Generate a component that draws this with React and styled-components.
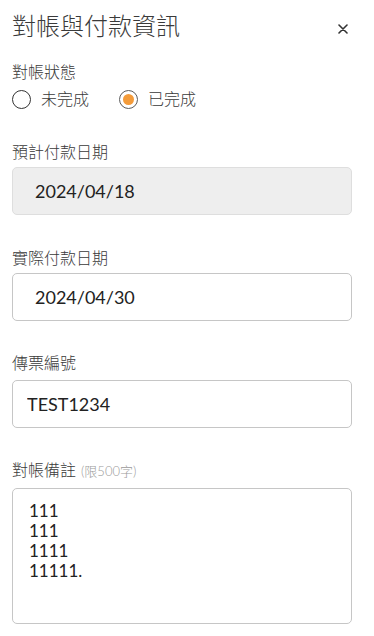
import React, { useState } from 'react'
import styled, { createGlobalStyle } from 'styled-components'

const GlobalStyle = createGlobalStyle`
    html, body {
        margin: 0;
        padding: 0;
        background: #ffffff;
    }
    body {
        font-family: "Lato", "Noto Sans CJK TC", sans-serif;
        color: #333333;
    }
    * {
        box-sizing: border-box;
    }
`;

const Panel = styled.div`
    width: 374px;
    padding: 10px 22px 0 12px;
    display: flex;
    flex-direction: column;
`;

const Header = styled.div`
    display: flex;
    align-items: center;
    justify-content: space-between;
    height: 32px;
    margin-bottom: 19px;
`;

const Title = styled.h1`
    margin: 0;
    font-size: 24px;
    line-height: 32px;
    font-weight: 300;
    color: #3a3a3a;
`;

const CloseButton = styled.button`
    width: 20px;
    height: 20px;
    margin: 6px -1px 0 0;
    padding: 0;
    border: none;
    background: transparent;
    display: flex;
    align-items: center;
    justify-content: center;
    cursor: pointer;
`;

const Field = styled.div`
    display: flex;
    flex-direction: column;
    gap: ${p => p.$gap || 4}px;
    margin-bottom: ${p => p.$spacing || 32}px;
`;

const Label = styled.label`
    font-size: 16px;
    line-height: 22px;
    font-weight: 300;
    color: #3a3a3a;
`;

const Hint = styled.span`
    margin-left: 5px;
    font-size: 13px;
    color: #9a9a9a;
`;

const RadioGroup = styled.div`
    display: flex;
    align-items: center;
    gap: 30px;
    height: 22px;
`;

const RadioOption = styled.label`
    display: flex;
    align-items: center;
    gap: 10px;
    font-size: 16px;
    line-height: 22px;
    font-weight: 300;
    color: #3a3a3a;
    cursor: pointer;
`;

const HiddenInput = styled.input`
    display: none;
`;

const RadioCircle = styled.span`
    width: 19px;
    height: 19px;
    border-radius: 50%;
    border: 1.5px solid ${p => (p.$checked ? '#5c5c5c' : '#333333')};
    display: flex;
    align-items: center;
    justify-content: center;

    &::after {
        content: '';
        width: 11px;
        height: 11px;
        border-radius: 50%;
        background: ${p => (p.$checked ? '#f39b3a' : 'transparent')};
    }
`;

const TextInput = styled.input`
    width: 100%;
    height: 48px;
    padding: 0 ${p => (p.$date ? 22 : 14)}px;
    font-family: "Lato", "Noto Sans CJK TC", sans-serif;
    font-size: 18px;
    color: #222222;
    background: ${p => (p.disabled ? '#eeeeee' : '#ffffff')};
    border: 1px solid ${p => (p.disabled ? '#dedede' : '#c6c6c6')};
    border-radius: 5px;
    outline: none;
    -webkit-text-fill-color: #222222;
    opacity: 1;
`;

const TextArea = styled.textarea`
    width: 100%;
    height: 136px;
    padding: 12px 16px;
    font-family: "Lato", "Noto Sans CJK TC", sans-serif;
    font-size: 17px;
    line-height: 20px;
    color: #222222;
    background: #ffffff;
    border: 1px solid #c6c6c6;
    border-radius: 5px;
    resize: none;
    outline: none;
`;

const statuses = ['未完成', '已完成']

const App = () => {
    const [status, setStatus] = useState('已完成')

    return (
        <>
            <GlobalStyle />
            <Panel>
                <Header>
                    <Title>對帳與付款資訊</Title>
                    <CloseButton aria-label="close">
                        <svg width="10" height="10" viewBox="0 0 10 10">
                            <path d="M1 1 L9 9 M9 1 L1 9" stroke="#333" strokeWidth="1.6" strokeLinecap="round" />
                        </svg>
                    </CloseButton>
                </Header>

                <Field $gap={5} $spacing={31}>
                    <Label>對帳狀態</Label>
                    <RadioGroup>
                        {statuses.map(s => (
                            <RadioOption key={s}>
                                <HiddenInput type="radio" name="status" checked={status === s} onChange={() => setStatus(s)} />
                                <RadioCircle $checked={status === s} />
                                {s}
                            </RadioOption>
                        ))}
                    </RadioGroup>
                </Field>

                <Field>
                    <Label>預計付款日期</Label>
                    <TextInput $date disabled defaultValue="2024/04/18" />
                </Field>

                <Field $spacing={31}>
                    <Label>實際付款日期</Label>
                    <TextInput $date defaultValue="2024/04/30" />
                </Field>

                <Field $gap={6} $spacing={31}>
                    <Label>傳票編號</Label>
                    <TextInput defaultValue="TEST1234" />
                </Field>

                <Field $gap={6} $spacing={0}>
                    <Label>對帳備註<Hint>(限500字)</Hint></Label>
                    <TextArea defaultValue={'111\n111\n1111\n11111.'} />
                </Field>
            </Panel>
        </>
    )
}

export default App
